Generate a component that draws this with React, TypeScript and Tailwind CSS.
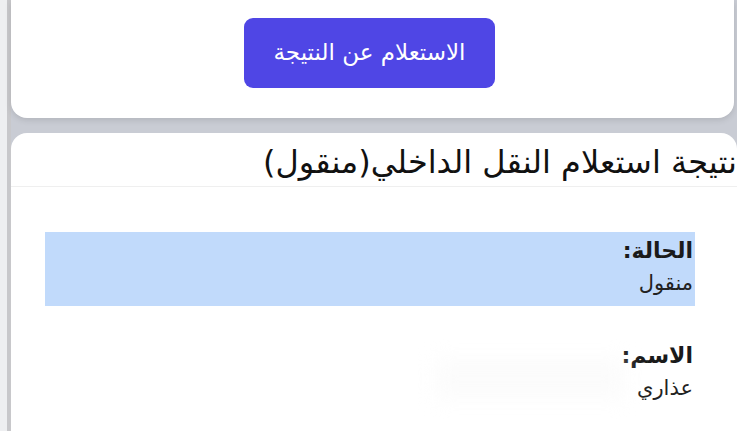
const Field: React.FC<{ label: string; value: string; highlight?: boolean }> = ({
  label,
  value,
  highlight,
}) => (
  <div
    className={`flex flex-col items-start px-[2px] ${
      highlight ? "bg-[#c1dafb] h-[74px] pt-[4px]" : "h-[74px] pt-[4px]"
    }`}
  >
    <div className="text-[22px] leading-[30px] font-bold text-[#1a1a1a]">{label}</div>
    <div className="text-[21px] leading-[34px] text-[#222]">{value}</div>
  </div>
);

const App: React.FC = () => {
  return (
    <div className="w-[737px] h-[431px] overflow-hidden flex bg-[#f1f2f4] font-['DejaVu_Sans',sans-serif]">
      {/* left edge of the screen */}
      <div className="w-[7px] shrink-0 bg-[#eeeff1]" />
      <div className="w-[4px] shrink-0 bg-[#c8c8cb]" />

      <div className="flex-1 flex flex-col bg-[#c9ccd4]">
        {/* query card */}
        <div className="h-[118px] shrink-0 bg-white rounded-b-[16px] mr-[3px] flex justify-center pt-[18px] shadow-[0_2px_6px_rgba(0,0,0,0.12)]">
          <button
            dir="rtl"
            className="w-[251px] h-[70px] rounded-[9px] bg-[#4f46e5] text-white text-[23px] leading-none pb-[2px] ml-[-6px]"
          >
            الاستعلام عن النتيجة
          </button>
        </div>

        <div className="h-[15px] shrink-0" />

        {/* result card */}
        <div dir="rtl" className="flex-1 bg-white rounded-t-[16px] flex flex-col">
          <div className="h-[54px] shrink-0 border-b border-[#efefef] flex items-end">
            <h2 className="whitespace-nowrap text-[32px] leading-[48px] text-[#111]">
              نتيجة استعلام النقل الداخلي(منقول)
            </h2>
          </div>

          <div className="flex flex-col pt-[45px] pr-[42px] pl-[34px] gap-[31px]">
            <Field label="الحالة:" value="منقول" highlight />
            <div className="relative">
              <Field label="الاسم:" value="عذاري" />
              <div className="absolute top-[22px] right-[70px] w-[190px] h-[40px] bg-[#f8f8f8] blur-[10px] opacity-50" />
            </div>
          </div>
        </div>
      </div>
    </div>
  );
};

export default App;
